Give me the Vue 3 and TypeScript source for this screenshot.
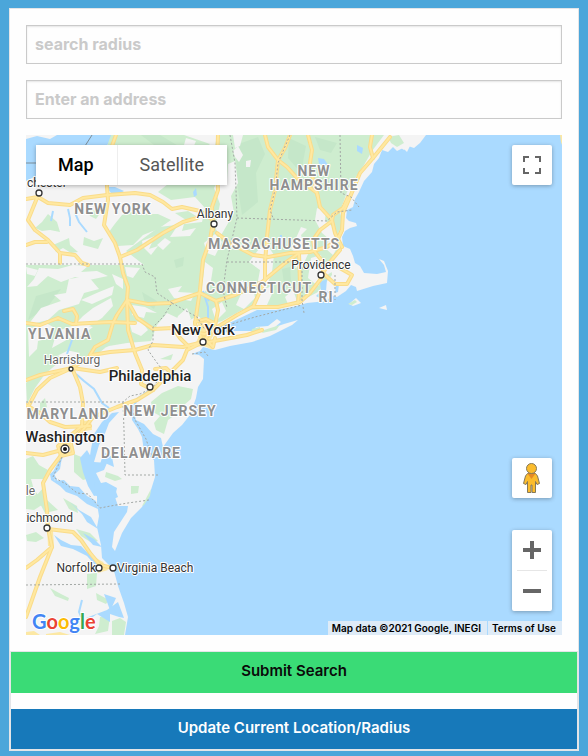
<script setup lang="ts">
import { ref } from 'vue'

interface Label {
  text: string
  x: number
  y: number
  kind: 'state' | 'city' | 'minor' | 'metro'
  anchor?: 'start' | 'middle' | 'end'
}

interface Dot {
  x: number
  y: number
  r: number
}

const radius = ref('')
const address = ref('')
const mapType = ref<'map' | 'satellite'>('map')

const land: string[] = [
  'M26 135H404L411 144 407 152 403 148 397 151 393 147 388 152 382 150 379 158 374 164 372 172 364 181 359 192 355 199 353 207 347 210 346 218 349 221 356 223 357 226 350 228 345 231 342 237 343 246 350 249 353 256 355 263 360 266 364 273 377 274 386 272 384 265 379 259 384 261 388 271 387 283 373 286 357 291 356 287 351 285 346 291 337 297 331 295 327 301 307 303 293 307 276 310 257 310 240 318 225 325 217 330 217 334 233 331 253 331 256 327 268 326 277 319 281 322 275 327 284 324 298 320 292 325 270 336 252 342 230 346 215 350 203 347 200 351 192 354 199 355 204 359 203 379 198 387 196 398 190 415 182 425 173 433 163 447 161 438 153 434 144 424 136 420 133 407 132 420 138 429 142 437 144 452 154 460 155 477 150 493 142 507 131 518 122 533 115 551 112 547 114 532 127 512 128 506 118 506 115 497 117 488 106 482 101 483 96 473 104 470 107 463 94 462 99 445 104 436 109 423 119 412 112 413 102 422 94 434 91 449 89 462 91 476 97 493 97 504 99 516 97 527 101 545 102 558 109 565 114 571 118 586 124 603 128 617 125 635H26Z',
  'M349 304 356 298 361 303 353 306Z',
  'M379 308 386 305 387 310Z',
  'M392 135H426L420 143 414 148 408 146 404 150 398 146Z',
]

const greens: string[] = [
  'M217 135H384L372 151 364 165 354 180 347 192 340 212 343 224 336 237 341 251 331 262 332 275 318 292 297 303 265 309 242 310 222 321 209 325 198 316 186 322 167 313 157 325 151 341 127 343 109 346 96 352 69 350 55 357 35 377 26 379V265H144L126 251 159 227 202 222 205 208 195 197 171 200 158 192 168 184 195 179 203 164 214 153Z',
  'M100 135H184L210 144 196 157 181 162 155 160 142 154 122 157 112 150Z',
  'M48 214 57 222 60 232 50 230 42 231 35 228 42 222Z',
  'M53 245 69 238 70 245 78 252 71 253 63 248 56 252Z',
  'M114 225 122 215 130 212 144 214 158 214 171 220 158 229 143 235 133 245 118 246 111 238 109 232Z',
  'M175 213 188 211 196 216 186 220Z',
  'M87 209 101 212 96 219 90 216Z',
  'M84 237 94 241 103 238 98 249 83 245Z',
  'M388 137 399 135 404 143 397 147 391 143Z',
  'M26 383 42 366 54 355 65 357 45 374 35 388 27 404Z',
  'M84 343 99 340 95 346 105 348 94 357 72 362 80 353 66 350Z',
  'M151 402 162 393 178 386 193 389 191 399 184 405 178 413 168 420 164 434 156 430 154 423 160 416 153 412Z',
  'M160 359 173 354 171 360Z',
  'M26 459 33 456 39 465 48 470 45 479 31 479 34 490 45 503 34 510 26 509Z',
  'M74 454 84 458 88 463 83 469 90 478 83 480 74 472Z',
  'M36 496 44 487 47 500 58 510 45 513Z',
  'M63 498 77 506 78 513 69 509Z',
  'M76 529 90 533 98 541 92 543 81 536Z',
  'M26 535 36 532 44 538 36 542 27 541Z',
  'M106 472 118 476 122 479 115 481 105 477Z',
  'M131 486 139 486 138 493 131 494Z',
  'M87 574 97 573 96 586 87 589Z',
  'M50 588 61 594 69 598 68 601 55 596Z',
  'M96 593 109 600 106 604 97 600Z',
  'M112 621 120 618 126 622 124 635H112Z',
  'M100 617 110 616 108 631 95 634 99 626Z',
  'M40 403 45 398 47 407 40 411Z',
  'M252 329 260 327 260 331 251 333Z',
  'M264 330 280 325 276 330 262 333Z',
  'M348 304 355 300 357 302 352 305Z',
  'M142 506 151 489 150 496 144 505Z',
]

const shades: string[] = [
  'M236 145 258 137 265 154 256 173 258 202 242 215 237 183Z',
  'M289 138 306 146 301 173 288 158Z',
  'M315 137 337 143 331 153 320 150Z',
  'M174 260 184 257 183 266 176 268Z',
  'M36 296 61 289 49 305 28 320Z',
  'M141 135H160L180 147 162 151Z',
  'M142 292 157 301 154 309 145 303Z',
  'M251 286 263 276 258 294Z',
  'M282 269 290 267 291 281 284 284Z',
]

const pale: string[] = [
  'M228 164 235 161 238 183 231 196 234 213 220 237 215 227 220 204 214 188 219 178 227 180Z',
  'M233 151 238 146 243 155 239 162 235 157Z',
  'M233 135H243L240 146 235 148Z',
  'M246 161 251 160 250 167 246 167Z',
  'M204 243 215 234 222 242 215 256 207 253Z',
  'M205 262 213 268 210 287 201 295Z',
  'M26 267 38 270 35 276 27 274Z',
  'M39 268 58 269 73 265 88 266 81 272 97 271 108 276 89 280 75 277 61 282 48 276 37 286 27 287 34 279Z',
  'M69 279 88 276 99 289 84 293 79 304 59 310 48 320 28 325 41 308 61 301 54 295 66 293Z',
  'M99 292 114 286 112 295 92 304 81 300Z',
  'M93 308 111 298 113 306 102 318 88 327 69 331 83 316Z',
  'M28 329 46 323 55 328 50 338 38 341 37 349 29 357Z',
  'M57 331 78 324 93 327 81 336 70 338 52 348Z',
  'M125 267 140 268 133 278 127 276Z',
  'M112 274 123 279 123 289 116 284Z',
  'M132 305 145 307 157 313 146 312 144 318 132 315Z',
  'M129 321 142 322 148 330 141 336 132 332Z',
  'M142 241 155 236 149 249 158 246 151 255 143 247Z',
  'M176 228 184 224 182 231 196 228 190 236 170 237Z',
  'M165 238 171 242 163 250 157 245Z',
  'M168 289 182 286 178 292 195 293 191 301 174 298Z',
  'M178 316 187 308 191 319 184 327 174 326Z',
  'M259 249 266 243 274 255 272 272 265 291 258 281 260 270 249 262Z',
  'M301 227 307 229 301 235 304 245 309 252 303 265 295 268 298 254 291 249Z',
  'M317 208 326 211 325 220 334 228 340 243 333 255 326 249 329 239 322 233 315 220Z',
  'M311 258 321 255 322 263 335 261 332 272 325 276 318 286 308 278Z',
  'M339 258 349 254 352 264 359 271 342 279 332 271Z',
  'M241 294 254 292 255 298 244 309 236 305Z',
  'M261 291 272 286 272 294 266 307 253 306Z',
  'M351 193 360 181 354 197 347 209 342 205Z',
  'M365 166 376 151 388 139 381 152Z',
  'M212 309 222 302 226 311 216 321Z',
  'M236 283 243 280 244 287 237 289Z',
  'M285 297 293 290 297 301 288 304Z',
  'M102 148 113 145 121 153 113 161 103 155Z',
  'M186 138 196 141 193 148 184 145Z',
]

const waters: string[] = [
  'M26 139 37 136 50 139 57 135H111L107 146 90 148H36V176L26 181Z',
  'M106 187 115 187 124 191 119 194 111 193Z',
  'M193 192 196 188 197 195 194 197Z',
  'M318 158 324 159 329 166 319 164Z',
  'M357 145 363 148 362 154 357 151Z',
  'M280 235 282 235 282 245 279 242Z',
  'M320 282 327 279 326 291 329 292 323 300 316 296 321 291Z',
  'M336 285 339 284 338 292 335 293Z',
  'M87 450 94 462 93 480 99 495 94 496 88 486 83 472 80 458Z',
  'M62 457 60 469 53 476 55 481 64 480 70 486 79 487 87 496 96 501 98 509 87 504 77 496 66 492 60 486 51 480 50 474 57 468 59 458Z',
  'M70 502 79 510 91 517 98 529 87 522 82 514Z',
  'M54 535 61 540 71 545 81 546 93 558 100 565 96 566 87 556 73 549 61 546Z',
  'M83 533 94 539 102 547 93 545Z',
  'M104 452 112 457 114 467 105 463 99 467Z',
  'M94 482 105 485 115 489 118 497 107 502 95 495Z',
  'M91 616 107 610 118 602 124 618 119 617 110 614 110 622 97 614 90 619 86 618Z',
  'M104 594 116 598 112 607 117 613 110 610Z',
]

const rivers: string[] = [
  'M53 211 51 221',
  'M68 209 70 218 70 226',
  'M75 213 79 222 87 232',
  'M203 291 208 307 208 322',
  'M72 340 67 354',
  'M76 374 84 381 94 389 102 403 109 408',
  'M82 600 79 612 84 623',
  'M205 295 209 301',
  'M62 457 53 474 57 482 72 490',
  'M150 390 137 399 132 411',
]

const urban: string[] = [
  'M560 135H562V145L561 142Z',
  'M198 320 206 318 212 326 214 334 209 343 213 350 204 346 194 347 198 338Z',
  'M84 421 91 420 92 430 84 431Z',
  'M26 632 34 631 40 635H26Z',
  'M46 634 60 632 70 635H46Z',
  'M47 527 53 531 54 546 48 546Z',
  'M96 558 103 562 108 570 98 573Z',
]

const roads: string[] = [
  'M26 199 38 197 48 203 70 205 83 198 107 195 135 193 150 195 163 202 172 209 182 207 200 211 213 220',
  'M116 135 112 146 107 158 107 187 108 200 104 225 115 243 120 257 123 273 128 287 127 300',
  'M127 300 117 315 113 323 108 340 95 347 90 355',
  'M127 300 128 330 135 353 142 370 141 384 153 390',
  'M127 300 137 318 153 329 173 328 180 338 189 347',
  'M120 257 137 250 163 233 183 222 197 218',
  'M37 198 28 220 35 230 48 240 60 253 75 255 82 263 88 265',
  'M60 253 60 263',
  'M26 245 35 242 47 242',
  'M218 135 217 165 218 190 212 207 213 230',
  'M217 233 230 243 253 255 268 257 290 253 310 252 327 247 337 240 342 230',
  'M265 135 268 147 278 160 275 190 270 210 267 237 265 263 265 280 253 307',
  'M290 135 285 148 278 160 287 167 297 178 317 193 320 207 332 220 335 233 342 247',
  'M308 135 312 150 310 163 313 180 318 197',
  'M390 137 373 158 360 173 350 197 343 213 342 230 338 239',
  'M372 135 370 147 373 158',
  'M348 197 343 208 333 215 332 221 320 230 313 240 315 252 323 262 323 273',
  'M323 273 335 284 347 284 352 275 338 267 330 263',
  'M203 341 214 329 237 315 252 307 278 307 300 302 310 293 320 280 323 273 330 262 340 250',
  'M127 300 148 304 170 303 200 293 216 301 235 295 262 282 285 263 298 254',
  'M299 254 300 283 298 303',
  'M216 301 218 310 215 326',
  'M213 222 210 240 203 260 200 290 197 310 195 324 203 342',
  'M26 323 40 325 58 318 72 324 90 323 110 322 135 323',
  'M64 311 73 309 77 316 76 324',
  'M26 380 40 375 72 368 100 372 117 368',
  'M72 368 92 355 110 352 135 350 153 345 183 347 203 342',
  'M72 368 50 378 37 390 28 407',
  'M72 368 80 387 83 403 82 427',
  'M65 448 83 430 93 417 117 407 137 400 153 390 170 373 183 360 187 350 203 342',
  'M155 369 166 368 175 377',
  'M26 405 40 413 50 422 65 427 90 426',
  'M82 426 71 435 58 446 61 456 73 453 71 444 60 445',
  'M65 450 50 470 43 483 47 510 48 528 52 547 40 577 26 617',
  'M48 529 73 532 81 540 90 553 100 565 113 568',
  'M52 547 37 560 26 568',
  'M26 453 43 455 58 451',
  'M203 343 220 340 247 335 262 330',
  'M214 323 206 319 195 322',
  'M190 332 205 334 212 330',
  'M204 338 213 347 215 338',
]

const borders: string[] = [
  'M26 264H142L145 272 155 277 157 293 172 303 163 317 153 327 153 341 148 350 155 360 164 372 153 387',
  'M172 303 197 317 205 330',
  'M26 402H123L130 396 140 394 150 389',
  'M123 402 124 430 125 475H158',
  'M132 405 134 418 146 439 153 460',
  'M340 135 341 193 351 197 359 207',
  'M237 218 327 221 337 212 352 210',
  'M230 135 235 163 237 218 227 260 223 290 227 308',
  'M227 262H302V300L304 313',
  'M290 135 278 163 275 190 270 210 273 218',
  'M26 585 120 584',
  'M221 327 255 317 302 305',
  'M62 457 53 477 66 484 77 493 88 494 100 508 116 505 128 503 149 500',
  'M335 275 335 300',
  'M192 354 205 352 208 356',
]

const labels: Label[] = [
  { text: 'chester', x: 27, y: 187, kind: 'city', anchor: 'start' },
  { text: 'NEW YORK', x: 113, y: 214, kind: 'state' },
  { text: 'NEW', x: 314, y: 176, kind: 'state' },
  { text: 'HAMPSHIRE', x: 314, y: 190, kind: 'state' },
  { text: 'Albany', x: 215, y: 218, kind: 'city' },
  { text: 'MASSACHUSETTS', x: 274, y: 249, kind: 'state' },
  { text: 'Providence', x: 321, y: 269, kind: 'city' },
  { text: 'CONNECTICUT', x: 259, y: 293, kind: 'state' },
  { text: 'RI', x: 326, y: 302, kind: 'state' },
  { text: 'YLVANIA', x: 28, y: 339, kind: 'state', anchor: 'start' },
  { text: 'New York', x: 203, y: 335, kind: 'metro' },
  { text: 'Harrisburg', x: 72, y: 364, kind: 'minor' },
  { text: 'Philadelphia', x: 150, y: 381, kind: 'metro' },
  { text: 'NEW JERSEY', x: 170, y: 416, kind: 'state' },
  { text: 'MARYLAND', x: 68, y: 419, kind: 'state' },
  { text: 'Washington', x: 65, y: 442, kind: 'metro' },
  { text: 'DELAWARE', x: 141, y: 458, kind: 'state' },
  { text: 'le', x: 35, y: 495, kind: 'minor', anchor: 'end' },
  { text: 'Richmond', x: 73, y: 522, kind: 'city', anchor: 'end' },
  { text: 'Norfolk', x: 96, y: 572, kind: 'city', anchor: 'end' },
  { text: 'Virginia Beach', x: 117, y: 572, kind: 'city', anchor: 'start' },
]

const dots: Dot[] = [
  { x: 39, y: 193, r: 3 },
  { x: 214, y: 224, r: 3 },
  { x: 321, y: 275, r: 3 },
  { x: 203, y: 342, r: 3 },
  { x: 71, y: 369, r: 2 },
  { x: 150, y: 387, r: 3 },
  { x: 65, y: 449, r: 4 },
  { x: 47, y: 528, r: 3 },
  { x: 99, y: 568, r: 3 },
  { x: 113, y: 568, r: 3 },
]

const logo = [
  { ch: 'G', tone: 'tone-blue' },
  { ch: 'o', tone: 'tone-red' },
  { ch: 'o', tone: 'tone-yellow' },
  { ch: 'g', tone: 'tone-blue' },
  { ch: 'l', tone: 'tone-green' },
  { ch: 'e', tone: 'tone-red' },
]
</script>

<template>
  <form class="card" @submit.prevent>
    <div class="fields">
      <input v-model="radius" class="field" type="text" placeholder="search radius" aria-label="search radius" />
      <input v-model="address" class="field" type="text" placeholder="Enter an address" aria-label="Enter an address" />

      <section class="map" aria-label="Map">
        <svg class="canvas" viewBox="26 135 536 500" preserveAspectRatio="xMinYMin slice" aria-hidden="true">
          <path v-for="d in land" :key="d" :d="d" class="land" />
          <path v-for="d in greens" :key="d" :d="d" class="green" />
          <path v-for="d in shades" :key="d" :d="d" class="shade" />
          <path v-for="d in pale" :key="d" :d="d" class="land" />
          <path v-for="d in waters" :key="d" :d="d" class="water" />
          <path v-for="d in rivers" :key="d" :d="d" class="river" />
          <path v-for="d in urban" :key="d" :d="d" class="urban" />
          <path v-for="d in roads" :key="'c' + d" :d="d" class="road-case" />
          <path v-for="d in roads" :key="'r' + d" :d="d" class="road" />
          <path v-for="d in borders" :key="d" :d="d" class="border" />
          <path d="M26 163H36M92 135 85 146" class="country" />
          <text
            v-for="l in labels"
            :key="l.text"
            :x="l.x"
            :y="l.y"
            :class="['label', l.kind]"
            :text-anchor="l.anchor ?? 'middle'"
          >{{ l.text }}</text>
          <g v-for="dot in dots" :key="dot.x">
            <circle :cx="dot.x" :cy="dot.y" :r="dot.r" class="dot" />
            <circle v-if="dot.r === 4" :cx="dot.x" :cy="dot.y" r="2" class="dot-core" />
          </g>
        </svg>

        <div class="overlay">
          <div class="top">
            <div class="types">
              <button type="button" :class="['type', { active: mapType === 'map' }]" @click="mapType = 'map'">Map</button>
              <button type="button" :class="['type', { active: mapType === 'satellite' }]" @click="mapType = 'satellite'">Satellite</button>
            </div>
            <button type="button" class="tool" aria-label="Toggle fullscreen view">
              <svg width="18" height="18" viewBox="0 0 18 18"><path fill="#666" d="M0 0H6V2H2V6H0ZM12 0H18V6H16V2H12ZM0 12H2V16H6V18H0ZM16 12H18V18H12V16H16Z" /></svg>
            </button>
          </div>
          <div class="side">
            <button type="button" class="tool" aria-label="Street View">
              <svg width="20" height="32" viewBox="0 0 20 32">
                <path d="M5.5 11.5 3.5 14 1.5 21.5 4 22.5 5.5 19.5V30.500H9V23H10V30.500H13.500V19.500L15 22.500 17.500 21.500 15.500 14 13.500 11.500Z" fill="#fbbc2d" stroke="#85795a" />
                <path d="M5.500 11.500H13.500L9.500 17Z" fill="#e58a25" />
                <circle cx="9.500" cy="6.500" r="5" fill="#fbbc2d" stroke="#85795a" />
              </svg>
            </button>
            <div class="zoom">
              <button type="button" class="step" aria-label="Zoom in">
                <svg width="18" height="18" viewBox="0 0 18 18"><path fill="#666" d="M7 0H11V7H18V11H11V18H7V11H0V7H7Z" /></svg>
              </button>
              <span class="rule"></span>
              <button type="button" class="step" aria-label="Zoom out">
                <svg width="18" height="18" viewBox="0 0 18 18"><path fill="#666" d="M0 7H18V11H0Z" /></svg>
              </button>
            </div>
          </div>
          <div class="bottom">
            <a class="logo" href="#" aria-label="Google"><span v-for="(g, i) in logo" :key="i" :class="g.tone">{{ g.ch }}</span></a>
            <div class="legal">
              <span class="note">Map data ©2021 Google, INEGI</span>
              <a class="note" href="#">Terms of Use</a>
            </div>
          </div>
        </div>
      </section>
    </div>

    <div class="actions">
      <button type="submit" class="action submit">Submit Search</button>
      <button type="button" class="action update">Update Current Location/Radius</button>
    </div>
  </form>
</template>

<style>
body {
  background: #4ba6da;
}
</style>

<style scoped>
.card {
  margin: 8px 9px 5px;
  border: 1px solid #e3e5e8;
  background: #fefefe;
  font-family: Inter, "Liberation Sans", sans-serif;
}
.fields {
  display: flex;
  flex-direction: column;
  gap: 16px;
  padding: 16px;
}
.field {
  box-sizing: border-box;
  width: 100%;
  height: 39px;
  padding: 7px 8px 9px;
  border: 1px solid #cacaca;
  border-radius: 0;
  background: #fefefe;
  box-shadow: inset 0 1px 2px rgba(10, 10, 10, 0.1);
  color: #0a0a0a;
  font: 700 16px/20px Inter, "Liberation Sans", sans-serif;
}
.field::placeholder {
  color: #cacaca;
  opacity: 1;
}
.map {
  position: relative;
  height: 500px;
  overflow: hidden;
  background: #aadaff;
}
.canvas {
  display: block;
  width: 100%;
  height: 100%;
}
.land { fill: #f4f4f4; }
.green { fill: #ceedcf; }
.shade { fill: #c5e7c9; }
.water { fill: #aadaff; }
.urban { fill: #fce8a4; }
.river { fill: none; stroke: #aadaff; stroke-width: 2; }
.road-case,
.road {
  fill: none;
  stroke-linejoin: round;
  stroke-linecap: round;
}
.road-case { stroke: #fadc8a; stroke-width: 4; }
.road { stroke: #ffe8a0; stroke-width: 2; }
.border {
  fill: none;
  stroke: #a3a8a5;
  stroke-width: 1;
  stroke-dasharray: 2 2;
}
.country { fill: none; stroke: #7d8d98; stroke-width: 1; }
.dot { fill: #fff; stroke: #333; stroke-width: 1.3; }
.dot-core { fill: #111; }
.label {
  font-family: Roboto, sans-serif;
  font-size: 12px;
  fill: #333;
  stroke: #fff;
  stroke-width: 2px;
  stroke-linejoin: round;
  paint-order: stroke;
}
.state {
  font-size: 14px;
  font-weight: 700;
  letter-spacing: 1px;
  fill: #8f8f8f;
}
.metro { font-size: 15px; font-weight: 500; fill: #222; }
.minor { fill: #666; }

.overlay {
  position: absolute;
  inset: 0;
  display: flex;
  flex-direction: column;
}
.top {
  display: flex;
  justify-content: space-between;
  padding: 10px;
}
.types {
  display: flex;
  gap: 1px;
  border-radius: 2px;
  background: #eee;
  box-shadow: 0 1px 4px rgba(0, 0, 0, 0.3);
}
.type {
  height: 40px;
  padding: 0 23px 0 22px;
  border: 0;
  background: #fff;
  color: #565656;
  font: 400 18px/40px Roboto, sans-serif;
}
.type.active {
  color: #000;
  font-weight: 500;
}
.tool {
  display: flex;
  align-items: center;
  justify-content: center;
  width: 40px;
  height: 40px;
  padding: 0;
  border: 0;
  border-radius: 2px;
  background: #fff;
  box-shadow: 0 1px 4px rgba(0, 0, 0, 0.3);
}
.side {
  display: flex;
  flex-direction: column;
  align-items: flex-end;
  gap: 32px;
  margin-top: auto;
  padding: 0 10px;
}
.zoom {
  width: 40px;
  border-radius: 2px;
  background: #fff;
  box-shadow: 0 1px 4px rgba(0, 0, 0, 0.3);
}
.step {
  display: flex;
  align-items: center;
  justify-content: center;
  width: 40px;
  height: 40px;
  padding: 0;
  border: 0;
  background: transparent;
}
.rule {
  display: block;
  height: 1px;
  margin: 0 5px;
  background: #e6e6e6;
}
.bottom {
  display: flex;
  align-items: flex-end;
  justify-content: space-between;
  height: 24px;
}
.logo {
  padding: 0 0 2px 6px;
  font: 700 20px/24px Lato, sans-serif;
  text-decoration: none;
  -webkit-text-stroke: 2px #fff;
  paint-order: stroke;
}
.tone-blue { color: #4285f4; }
.tone-red { color: #ea4335; }
.tone-yellow { color: #fbbc05; }
.tone-green { color: #34a853; }
.legal {
  display: flex;
  gap: 1px;
}
.note {
  padding: 0 6px 0 4px;
  background: #deebf7;
  color: #000;
  font-size: 10px;
  font-weight: 600;
  line-height: 14px;
  text-decoration: none;
}
.actions {
  display: flex;
  flex-direction: column;
  gap: 16px;
  border: 1px solid #e3e5e8;
}
.action {
  height: 40px;
  padding: 0 16px 3px;
  border: 0;
  font: 600 15px/20px Inter, "Liberation Sans", sans-serif;
}
.submit {
  height: 41px;
  background: #3adb76;
  color: #0a0a0a;
}
.update {
  background: #1779ba;
  color: #fefefe;
}
</style>
